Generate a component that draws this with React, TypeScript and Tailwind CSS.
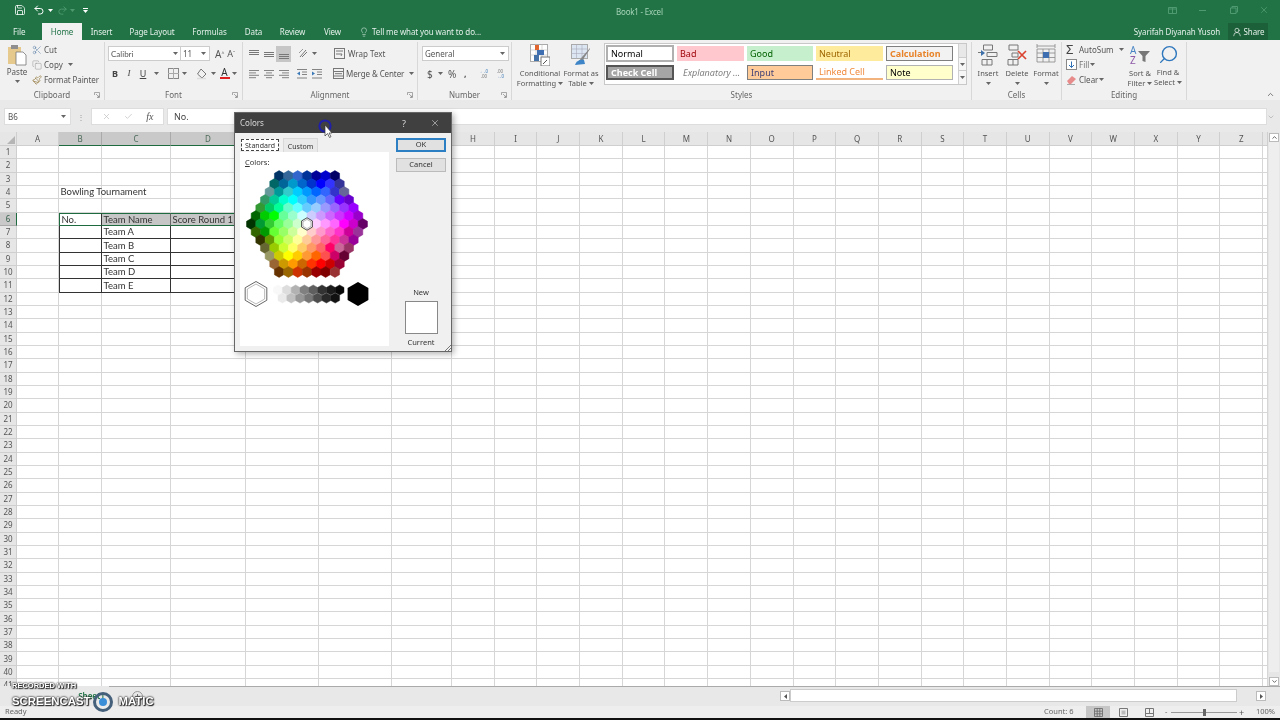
import React from "react";
import { Save, Undo2, Redo2, Lightbulb, Scissors, Copy, Paintbrush, X, Check, ChevronUp, ChevronDown, Search, UserRound } from "lucide-react";

const Caret = ({ c = "#666" }: { c?: string }) => (
  <svg width="5" height="3" viewBox="0 0 5 3" className="shrink-0"><path d="M0 0h5L2.5 3z" fill={c} /></svg>
);

const Launcher = () => (
  <svg width="6" height="6" viewBox="0 0 6 6" className="justify-self-end self-center"><path d="M.5 3V.5H5.5V5.5H3M2 2l3 3M3.5 5H5V3.5" fill="none" stroke="#888" strokeWidth=".7" /></svg>
);

const Group = ({ w, label, launcher, children }: { w: string; label: string; launcher?: boolean; children: React.ReactNode }) => (
  <div className={`${w} shrink-0 flex flex-col h-full border-r border-[#d8d8d8]`}>
    <div className="h-[50px] flex">{children}</div>
    <div className="grid grid-cols-[1fr_auto_1fr] h-[10px] items-center px-[4px] text-[8px] leading-none text-[#666]">
      <span />
      <span>{label}</span>
      {launcher ? <Launcher /> : <span />}
    </div>
  </div>
);

const Lines = ({ kind }: { kind: "l" | "c" | "r" | "t" | "m" | "b" }) => {
  const w = { l: [[1, 11], [1, 8], [1, 11], [1, 8]], c: [[1, 11], [3, 9], [1, 11], [3, 9]], r: [[1, 11], [4, 11], [1, 11], [4, 11]] } as any;
  if (kind === "t" || kind === "m" || kind === "b") {
    const ys = kind === "t" ? [2, 4, 6] : kind === "m" ? [4, 6, 8] : [6, 8, 10];
    return <svg width="12" height="12" viewBox="0 0 12 12">{ys.map((y) => <path key={y} d={`M1 ${y}.5h10`} stroke="#777" strokeWidth="1" />)}</svg>;
  }
  return (
    <svg width="12" height="10" viewBox="0 0 12 10">
      {w[kind].map((p: number[], i: number) => <path key={i} d={`M${p[0]} ${1.5 + i * 2.4}H${p[1]}`} stroke="#777" strokeWidth=".9" />)}
    </svg>
  );
};

const Indent = ({ rev }: { rev?: boolean }) => (
  <svg width="12" height="10" viewBox="0 0 12 10">
    <path d="M1 .5h10M6 3h5M6 5.5h5M1 9h10" stroke="#777" strokeWidth=".9" />
    <path d={rev ? "M1 2.5 4 4.5 1 6.5z" : "M4 2.5 1 4.5 4 6.5z"} fill="#3b79b8" />
  </svg>
);

const BigLabel = ({ a, b, caretB }: { a: string; b?: React.ReactNode; caretB?: boolean }) => (
  <div className="flex flex-col items-center text-[7.5px] leading-[10.5px] text-[#555] whitespace-nowrap mt-[2px]">
    <span>{a}</span>
    <span className="flex items-center gap-[2px] h-[10px]">{b}{caretB && <Caret />}</span>
  </div>
);

const StyleCell = ({ className, children }: { className: string; children: React.ReactNode }) => (
  <div className={`h-[15px] flex items-center pl-[3px] text-[9px] leading-none whitespace-nowrap ${className}`}>{children}</div>
);

function Ribbon() {
  return (
    <div className="h-[60px] bg-[#f1f1f1] flex font-['Noto_Sans',sans-serif] shrink-0 pt-[2px]">
      <Group w="w-[105px]" label="Clipboard" launcher>
        <div className="ml-[6px] w-[22px] flex flex-col items-center">
          <svg width="20" height="22" viewBox="0 0 20 22" className="mt-[2px]">
            <rect x="1" y="3" width="13" height="17" fill="#e6c98c" />
            <rect x="4" y="1" width="7" height="4" fill="#8f8f8f" />
            <path d="M9 8h7l3 3v10H9z" fill="#fff" stroke="#777" strokeWidth=".8" />
          </svg>
          <span className="text-[8px] leading-[10px] text-[#555] mt-[1px]">Paste</span>
          <span className="mt-[3px]"><Caret /></span>
        </div>
        <div className="ml-[4px] flex flex-col text-[8px] text-[#555] leading-none">
          <div className="h-[15px] flex items-center gap-[2px]"><Scissors size={10} color="#5a7ea8" strokeWidth={1.3} />Cut</div>
          <div className="h-[15px] flex items-center gap-[2px]"><Copy size={10} color="#888" strokeWidth={1.1} />Copy<span className="ml-[3px]"><Caret /></span></div>
          <div className="h-[15px] flex items-center gap-[2px] tracking-[-0.1px]"><Paintbrush size={10} color="#8a6d2d" strokeWidth={1.5} />Format Painter</div>
        </div>
      </Group>
      <Group w="w-[138px]" label="Font" launcher>
        <div className="pl-[3px] pt-[4px] flex flex-col gap-[5px] w-full">
          <div className="flex items-center h-[15px]">
            <div className="w-[73px] h-[15px] bg-white border border-[#ccc] flex items-center justify-between pl-[2px] pr-[2px] text-[8px] text-[#555] font-['Lato',sans-serif]">Calibri<Caret /></div>
            <div className="w-[29px] h-[15px] bg-white border border-l-0 border-[#ccc] flex items-center justify-between pl-[2px] pr-[3px] text-[8px] text-[#555]">11<Caret /></div>
            <span className="ml-[5px] text-[10px] leading-none text-[#555]">A<sup className="text-[5px]">^</sup></span>
            <span className="ml-[3px] text-[9px] leading-none text-[#555]">A<sup className="text-[5px]">ˇ</sup></span>
          </div>
          <div className="flex items-center h-[15px] text-[9px] text-[#444] leading-none">
            <span className="w-[8px] ml-[3px] font-bold text-center">B</span>
            <span className="w-[8px] ml-[6px] italic text-center font-['Liberation_Serif',serif]">I</span>
            <span className="w-[8px] ml-[6px] underline text-center">U</span>
            <span className="ml-[7px]"><Caret /></span>
            <svg width="11" height="11" viewBox="0 0 11 11" className="ml-[9px]"><rect x=".5" y=".5" width="10" height="10" fill="none" stroke="#888" /><path d="M5.5 0v11M0 5.5h11" stroke="#aaa" /></svg>
            <span className="ml-[3px]"><Caret /></span>
            <svg width="12" height="12" viewBox="0 0 12 12" className="ml-[9px]"><path d="M5 1 10 6 6 10 1.5 6z" fill="none" stroke="#777" /><path d="M1 10.5h9" stroke="#ddd" strokeWidth="1.5" /></svg>
            <span className="ml-[3px]"><Caret /></span>
            <div className="ml-[4px] w-[9px] flex flex-col items-center text-[#333] text-[10px] leading-[9px]">A<div className="w-[10px] h-[2px] bg-[#e02020]" /></div>
            <span className="ml-[3px]"><Caret /></span>
          </div>
        </div>
      </Group>
      <Group w="w-[175px]" label="Alignment" launcher>
        <div className="pl-[3px] pt-[4px] flex flex-col gap-[5px] w-full">
          <div className="flex items-center h-[15px]">
            <span className="w-[14px] flex justify-center ml-[1px]"><Lines kind="t" /></span>
            <span className="w-[15px] flex justify-center"><Lines kind="m" /></span>
            <span className="w-[15px] h-[16px] bg-[#c6c6c6] flex justify-center items-center"><Lines kind="b" /></span>
            <svg width="12" height="11" viewBox="0 0 12 11" className="ml-[7px]"><path d="M2 9 8 2M4 9l5-5" stroke="#777" /><path d="M1 5 5 1" stroke="#999" /></svg>
            <span className="ml-[2px]"><Caret /></span>
            <svg width="11" height="11" viewBox="0 0 11 11" className="ml-[17px]"><rect x=".5" y=".5" width="10" height="10" fill="none" stroke="#777" /><path d="M2 3h7M2 6h6l-1 2" fill="none" stroke="#777" /></svg>
            <span className="ml-[3px] text-[8px] text-[#555] leading-none">Wrap Text</span>
          </div>
          <div className="flex items-center h-[15px]">
            <span className="w-[14px] flex justify-center ml-[1px]"><Lines kind="l" /></span>
            <span className="w-[15px] flex justify-center"><Lines kind="c" /></span>
            <span className="w-[15px] flex justify-center"><Lines kind="r" /></span>
            <span className="ml-[5px]"><Indent /></span>
            <span className="ml-[3px]"><Indent rev /></span>
            <svg width="11" height="11" viewBox="0 0 11 11" className="ml-[10px]"><rect x=".5" y=".5" width="10" height="10" fill="none" stroke="#777" /><path d="M0 3.5h11M0 8h11M2 5.7h7" stroke="#777" /></svg>
            <span className="ml-[2px] text-[8px] text-[#555] leading-none whitespace-nowrap tracking-[-0.1px]">Merge &amp; Center</span>
            <span className="ml-[5px]"><Caret /></span>
          </div>
        </div>
      </Group>
      <Group w="w-[94px]" label="Number" launcher>
        <div className="pl-[4px] pt-[4px] flex flex-col gap-[5px] w-full">
          <div className="w-[87px] h-[15px] bg-white border border-[#ccc] flex items-center justify-between pl-[2px] pr-[3px] text-[8px] text-[#555]">General<Caret /></div>
          <div className="flex items-center h-[15px] text-[#555] leading-none">
            <span className="ml-[5px] w-[6px] text-[10px]">$</span>
            <span className="ml-[5px]"><Caret /></span>
            <span className="ml-[5px] w-[9px] text-[10px]">%</span>
            <span className="ml-[7px] w-[3px] text-[9px] font-bold">,</span>
            <span className="ml-[13px] w-[8px] flex flex-col items-center gap-[1px] text-[4.5px] leading-[4.5px] text-[#3b79b8] whitespace-nowrap"><span>←.0</span><span className="text-[#777]">.00</span></span>
            <span className="ml-[8px] w-[8px] flex flex-col items-center gap-[1px] text-[4.5px] leading-[4.5px] text-[#777] whitespace-nowrap"><span>.00</span><span className="text-[#3b79b8]">→.0</span></span>
          </div>
        </div>
      </Group>
      <Group w="w-[460px]" label="Styles">
        <div className="w-[54px] ml-[1px] flex flex-col items-center pt-[2px]">
          <svg width="20" height="22" viewBox="0 0 20 22">
            <rect x=".5" y=".5" width="17" height="17" fill="#fff" stroke="#aaa" />
            <path d="M0 6h18M0 11h18M6 0v18M12 0v18" stroke="#bbb" strokeWidth=".6" />
            <rect x="5" y="1" width="4" height="5" fill="#e0652e" /><rect x="7" y="6" width="7" height="5" fill="#3f6fb0" /><rect x="4" y="11" width="5" height="6" fill="#4472a8" />
            <rect x="11" y="13" width="9" height="9" fill="#fff" stroke="#777" /><path d="M13 20l4-4" stroke="#555" />
          </svg>
          <BigLabel a="Conditional" b="Formatting" caretB />
        </div>
        <div className="w-[40px] ml-[-6px] flex flex-col items-center pt-[2px]">
          <svg width="20" height="22" viewBox="0 0 20 22">
            <rect x=".5" y=".5" width="16" height="14" fill="#dce6f3" stroke="#aaa" />
            <path d="M0 5h17M0 9.500h17M5.500 0v15M11 0v15" stroke="#aab" strokeWidth=".6" />
            <path d="M19 4 11 13l-3 4c3 1 5-1 5-3l6-9z" fill="#888" /><path d="M4 21c1-4 5-6 9-5l1 4z" fill="#3d85c6" />
          </svg>
          <BigLabel a="Format as" b="Table" caretB />
        </div>
        <div className="ml-[3px] mt-[1px] w-[363px] h-[42px] bg-white border border-[#c8c8c8] flex">
          <div className="w-[354px] grid grid-cols-[68px_67px_66px_67px_67px] gap-x-[3px] gap-y-[3px] pl-[1px] pt-[2px] content-start">
            <StyleCell className="border-2 border-[#b0b0b0] text-black h-[17px] mt-[-1px]">Normal</StyleCell>
            <StyleCell className="bg-[#ffc7ce] text-[#9c0006]">Bad</StyleCell>
            <StyleCell className="bg-[#c6efce] text-[#006100]">Good</StyleCell>
            <StyleCell className="bg-[#ffeb9c] text-[#9c6500]">Neutral</StyleCell>
            <StyleCell className="bg-[#f2f2f2] border border-[#7f7f7f] text-[#e8832a] font-bold">Calculation</StyleCell>
            <StyleCell className="bg-[#a5a5a5] border-2 border-[#555] text-white font-bold pl-[1px]">Check Cell</StyleCell>
            <StyleCell className="italic text-[#7f7f7f] pl-[6px]">Explanatory ...</StyleCell>
            <StyleCell className="bg-[#ffcc99] border border-[#7f7f7f] text-[#3f3f76]">Input</StyleCell>
            <StyleCell className="border-b-2 border-[#f2b47c] text-[#f08a3c]">Linked Cell</StyleCell>
            <StyleCell className="bg-[#ffffcc] border border-[#b2b2b2] text-black">Note</StyleCell>
          </div>
          <div className="ml-auto w-[8px] flex flex-col border-l border-[#d0d0d0] bg-[#f6f6f6]">
            <div className="h-[14px] border-b border-[#ccc] flex items-center justify-center bg-[#e8e8e8]" />
            <div className="h-[13px] border-b border-[#ccc] flex items-center justify-center"><Caret /></div>
            <div className="h-[13px] flex items-center justify-center"><Caret /></div>
          </div>
        </div>
      </Group>
      <Group w="w-[90px]" label="Cells">
        <div className="w-[28px] ml-[2px] flex flex-col items-center pt-[2px]">
          <svg width="20" height="22" viewBox="0 0 20 22"><path d="M5.500 1h9v5h-9zM0 8.500h4M9 8.500h10v4H9zM4 15.500h10v5.500H4zM9 15v6" fill="none" stroke="#777" /><path d="M3 6 7 9 3 12z" fill="#3d6fa8" /></svg>
          <BigLabel a="Insert" b={<Caret />} />
        </div>
        <div className="w-[28px] ml-[1px] flex flex-col items-center pt-[2px]">
          <svg width="20" height="22" viewBox="0 0 20 22"><path d="M2 1h9v5H2zM5 9h6v4H5zM1 15.500h10v5.500H1zM6 15v6" fill="none" stroke="#777" /><path d="M11 7 19 15M19 7l-8 8" stroke="#d9432f" strokeWidth="1.700" /></svg>
          <BigLabel a="Delete" b={<Caret />} />
        </div>
        <div className="w-[28px] ml-[1px] flex flex-col items-center pt-[2px]">
          <svg width="20" height="22" viewBox="0 0 20 22"><path d="M1 5h18v13H1zM7 5v13M13 5v13M1 9h18M1 13.500h18M1 2h18M1 0v4M19 0v4" fill="none" stroke="#888" strokeWidth=".8" /><rect x="7" y="8" width="6" height="6" fill="#3f6fb0" /></svg>
          <BigLabel a="Format" b={<Caret />} />
        </div>
      </Group>
      <Group w="w-[125px]" label="Editing">
        <div className="ml-[4px] flex flex-col text-[8px] text-[#555] leading-none w-[60px]">
          <div className="h-[15px] flex items-center gap-[2px] whitespace-nowrap"><span className="text-[13px] w-[11px] text-[#444] leading-none">Σ</span>AutoSum<span className="ml-[3px]"><Caret /></span></div>
          <div className="h-[15px] flex items-center gap-[2px]"><svg width="11" height="11" viewBox="0 0 11 11"><rect x=".5" y=".5" width="10" height="10" fill="#fff" stroke="#888" /><path d="M5.500 2.500v6M3 6l2.500 2.500L8 6" fill="none" stroke="#2f6fb5" /></svg><span className="text-[#777] flex items-center gap-[1px]">Fill<Caret /></span></div>
          <div className="h-[15px] flex items-center gap-[2px]"><svg width="11" height="11" viewBox="0 0 11 11"><path d="M1 7 6 2l4 3-5 5H3z" fill="#e88b8b" /><path d="M1 10.500h8" stroke="#aaa" /></svg><span className="flex items-center gap-[1px]">Clear<Caret /></span></div>
        </div>
        <div className="w-[28px] flex flex-col items-center pt-[2px]">
          <svg width="22" height="22" viewBox="0 0 22 22"><text x="1" y="10" fontSize="10" fontFamily="Noto Sans" fill="#4a86c5">A</text><text x="1" y="20" fontSize="10" fontFamily="Noto Sans" fill="#8e5aa8">Z</text><path d="M9 7h12l-4.500 5v6l-3-1v-5z" fill="#777" /></svg>
          <BigLabel a="Sort &" b="Filter" caretB />
        </div>
        <div className="w-[28px] flex flex-col items-center pt-[2px]">
          <Search size={21} color="#2f77bd" strokeWidth={1.6} className="scale-x-[-1]" />
          <BigLabel a="Find &" b="Select" caretB />
        </div>
      </Group>
      <div className="flex-1 flex items-end justify-end pr-[5px] pb-[1px]"><ChevronUp size={9} color="#555" strokeWidth={2} /></div>
    </div>
  );
}

function FormulaBar() {
  return (
    <div className="h-[32px] shrink-0 bg-[#e9e9e9] flex items-start pt-[8px] pl-[4px] font-['Noto_Sans',sans-serif] text-[8px] text-[#555]">
      <div className="w-[67px] h-[17px] bg-white border border-[#ddd] flex items-center justify-between pl-[3px] pr-[4px]">B6<Caret /></div>
      <span className="w-[20px] text-center text-[#999] leading-[17px]">⋮</span>
      <div className="w-[73px] h-[17px] bg-white border border-[#ddd] flex items-center justify-around px-[3px]">
        <X size={9} color="#c4c4c4" /><Check size={9} color="#c4c4c4" /><span className="italic font-['Liberation_Serif',serif] text-[10px] leading-none text-[#555]">fx</span>
      </div>
      <div className="w-[1100px] h-[17px] ml-[3px] bg-white border border-[#ddd] flex items-center pl-[6px] text-[9px] text-[#444]">No.</div>
      <ChevronDown size={8} color="#aaa" className="mt-[5px]" />
    </div>
  );
}

const cols = ["A", "B", "C", "D", "E", "F", "G", "H", "I", "J", "K", "L", "M", "N", "O", "P", "Q", "R", "S", "T", "U", "V", "W", "X", "Y", "Z", ""];

function cellClass(r: number, c: number) {
  const inTable = r >= 7 && r <= 11 && c >= 1 && c <= 3;
  if (r === 6 && c === 1) return "bg-white border-y border-l border-r border-[#1d6b3e] border-r-[#333]";
  if (r === 6 && c >= 2 && c <= 6) return "bg-[#c6c6c6] border-y border-[#1d6b3e] border-r border-r-[#666]";
  if (inTable && c === 1) return "border-l border-r border-b border-[#333]";
  if (inTable) return "border-r border-b border-[#333]";
  return "border-r border-b border-[#d6d6d6]";
}

const data: Record<string, string> = {
  "4,1": "Bowling Tournament", "6,1": "No.", "6,2": "Team Name", "6,3": "Score Round 1",
  "7,2": "Team A", "8,2": "Team B", "9,2": "Team C", "10,2": "Team D", "11,2": "Team E",
};

function Sheet() {
  const rows = Array.from({ length: 41 }, (_, i) => i + 1);
  return (
    <div className="flex-1 flex bg-white min-h-0 overflow-hidden">
      <div className="w-[1268px] shrink-0 grid grid-cols-[17px_42px_43px_69px_75px_73px_73px_60px_repeat(19,42.7px)_1fr] grid-rows-[14px_repeat(41,13.33px)] font-['Lato',sans-serif] text-[9.5px] text-[#333] leading-none">
        <div className="bg-[#e6e6e6] border-r border-b border-[#cfcfcf] flex items-end justify-end p-[1px]">
          <svg width="8" height="8" viewBox="0 0 8 8"><path d="M8 0v8H0z" fill="#b5b5b5" /></svg>
        </div>
        {cols.map((c, i) => (
          <div key={i} className={i >= 1 && i <= 6
            ? "bg-[#c9c9c9] border-r border-[#aaa] border-b border-b-[#1d6b3e] flex items-center justify-center text-[8px] text-[#4d6b5a] font-['Noto_Sans',sans-serif]"
            : "bg-[#e6e6e6] border-r border-b border-[#cfcfcf] flex items-center justify-center text-[8px] text-[#555] font-['Noto_Sans',sans-serif]"}>{c}</div>
        ))}
        {rows.map((r) => (
          <React.Fragment key={r}>
            <div className={r === 6
              ? "bg-[#c9c9c9] border-r border-r-[#1d6b3e] border-b border-[#aaa] flex items-center justify-center text-[8px] text-[#35604a] font-['Noto_Sans',sans-serif]"
              : "bg-[#e6e6e6] border-r border-b border-[#cfcfcf] flex items-center justify-center text-[8px] text-[#555] font-['Noto_Sans',sans-serif]"}>{r}</div>
            {cols.map((_, c) => (
              <div key={c} className={`${cellClass(r, c)} flex items-center pl-[1.500px] whitespace-nowrap`}>{data[`${r},${c}`]}</div>
            ))}
          </React.Fragment>
        ))}
      </div>
      <div className="flex-1 bg-[#e6e6e6] flex flex-col items-center pt-[1px]">
        <div className="w-[10px] h-[9px] bg-white border border-[#bbb] flex items-center justify-center"><ChevronUp size={7} color="#555" strokeWidth={3} /></div>
        <div className="w-[10px] h-[530px] bg-[#eeeeee]" />
        <div className="w-[10px] h-[9px] bg-white border border-[#bbb] flex items-center justify-center mt-auto"><ChevronDown size={7} color="#555" strokeWidth={3} /></div>
      </div>
    </div>
  );
}

function SheetTabs() {
  return (
    <div className="h-[20px] shrink-0 bg-[#e8e8e8] flex font-['Noto_Sans',sans-serif] text-[8px]">
      <div className="w-[74px]" />
      <div className="w-[35px] flex items-center justify-center text-[#217346] font-semibold">Sheet1</div>
      <div className="flex-1 border-t border-[#aaa] flex items-start pt-[4px]">
        <svg width="11" height="11" viewBox="0 0 11 11" className="ml-[23px]"><circle cx="5.500" cy="5.500" r="5" fill="none" stroke="#999" /><path d="M5.500 3v5M3 5.500h5" stroke="#777" /></svg>
        <div className="ml-[637px] w-[10px] h-[10px] bg-white border border-[#bbb] flex items-center justify-center"><svg width="3" height="5" viewBox="0 0 3 5"><path d="M3 0v5L0 2.500z" fill="#555" /></svg></div>
        <div className="w-[447px] h-[13px] mt-[-2px] bg-white border border-[#ccc]" />
        <div className="ml-[19px] w-[10px] h-[10px] bg-white border border-[#bbb] flex items-center justify-center"><svg width="3" height="5" viewBox="0 0 3 5"><path d="M0 0v5l3-2.500z" fill="#555" /></svg></div>
      </div>
    </div>
  );
}

function StatusBar() {
  return (
    <div className="h-[12px] shrink-0 bg-[#eeeeee] flex items-center pl-[5px] text-[7.5px] text-[#666] font-['Noto_Sans',sans-serif] leading-none">
      <span className="w-[1039px] -mt-[1px]">Ready</span>
      <span className="w-[42px]">Count: 6</span>
      <div className="w-[24px] h-full bg-[#c6c6c6] flex items-center justify-center"><svg width="9" height="9" viewBox="0 0 9 9"><path d="M.5.500h8v8h-8zM3.200.500v8M5.800.500v8M.5 3.200h8M.5 5.800h8" fill="none" stroke="#666" strokeWidth=".8" /></svg></div>
      <svg width="9" height="9" viewBox="0 0 9 9" className="ml-[9px]"><path d="M.5.500h8v8h-8z" fill="none" stroke="#777" /><rect x="2.500" y="2.500" width="4" height="4" fill="#bbb" /></svg>
      <svg width="9" height="9" viewBox="0 0 9 9" className="ml-[17px]"><path d="M.5.500h8v8h-8zM4.500.500v5M.5 5.500h8" fill="none" stroke="#777" /></svg>
      <span className="ml-[11px] w-[3px] text-[#666]">-</span>
      <div className="ml-[3px] w-[66px] h-[1px] bg-[#999] flex justify-center items-center"><div className="w-[3px] h-[7px] bg-[#666]" /></div>
      <span className="ml-[2px] w-[6px] text-[9px] text-[#555]">+</span>
      <span className="ml-[11px]">100%</span>
    </div>
  );
}

const palette = [
  "003366 336699 3366CC 003399 000099 0000CC 000066",
  "006666 006699 0099CC 0066CC 0033CC 0000FF 3333FF 333399",
  "669999 009999 33CCCC 00CCFF 0099FF 0066FF 3366FF 3333CC 666699",
  "339966 00CC99 00FFCC 00FFFF 33CCFF 3399FF 6699FF 6666FF 6600FF 6600CC",
  "339933 00CC66 00FF99 66FFCC 66FFFF 66CCFF 99CCFF 9999FF 9966FF 9933FF 9900FF",
  "006600 00CC00 00FF00 66FF99 99FFCC CCFFFF CCCCFF CC99FF CC66FF CC33FF CC00FF 9900CC",
  "003300 009933 33CC33 66FF66 99FF99 CCFFCC FFFFFF FFCCFF FF99FF FF66FF FF00FF CC00CC 660066",
  "336600 009900 66FF33 99FF66 CCFF99 FFFFCC FFCCCC FF99CC FF66CC FF33CC CC0099 993399",
  "333300 669900 99FF33 CCFF66 FFFF99 FFCC99 FF9999 FF6699 FF3399 CC3399 990099",
  "666633 99CC00 CCFF33 FFFF66 FFCC66 FF9966 FF6666 FF0066 CC6699 993366",
  "999966 CCCC00 FFFF00 FFCC00 FF9933 FF6600 FF5050 CC0066 660033",
  "996633 CC9900 FF9900 CC6600 FF3300 FF0000 CC0000 990033",
  "663300 996600 CC3300 993300 990000 800000 993333",
].map((s) => s.split(" "));

const greys = [
  "F8F8F8 DDDDDD B2B2B2 808080 5F5F5F 333333 1C1C1C 080808".split(" "),
  "EAEAEA C0C0C0 969696 777777 4D4D4D 292929 111111".split(" "),
];

const hex = (cx: number, cy: number, r: number) => {
  const w = r * 0.866;
  return `${cx},${cy - r} ${cx + w},${cy - r / 2} ${cx + w},${cy + r / 2} ${cx},${cy + r} ${cx - w},${cy + r / 2} ${cx - w},${cy - r / 2}`;
};

function ColorHoneycomb() {
  const cx = 67;
  const cy = 56;
  const px = 9.3;
  return (
    <svg width="148" height="142" viewBox="0 0 148 142" className="block">
      {palette.map((row, ri) =>
        row.map((c, i) => (
          <polygon key={`${ri}-${i}`} points={hex(cx + (i - (row.length - 1) / 2) * px, cy + (ri - 6) * 8, 5.4)} fill={`#${c}`} stroke={`#${c}`} strokeWidth=".5" />
        ))
      )}
      <polygon points={hex(cx, cy, 6.2)} fill="#fff" stroke="#222" strokeWidth=".8" />
      <polygon points={hex(cx, cy, 4.6)} fill="#fff" stroke="#888" strokeWidth=".6" />
      {greys.map((row, ri) =>
        row.map((c, i) => (
          <polygon key={`g${ri}-${i}`} points={hex(38 + ri * 4.4 + i * 8.8, 122 + ri * 8, 5.1)} fill={`#${c}`} stroke={`#${c}`} strokeWidth=".4" />
        ))
      )}
      <polygon points={hex(16, 126, 12.5)} fill="#fff" stroke="#555" strokeWidth=".9" />
      <polygon points={hex(16, 126, 10)} fill="#fff" stroke="#999" strokeWidth=".7" />
      <polygon points={hex(118, 126, 12)} fill="#000" />
    </svg>
  );
}

function ColorsDialog() {
  return (
    <div className="absolute left-[234px] top-[112px] w-[218px] h-[240px] bg-[#f0f0f0] border border-[#666] shadow-[2px_2px_6px_rgba(0,0,0,0.3)] flex flex-col font-['Noto_Sans',sans-serif] text-[7.5px] text-[#333] leading-none">
      <div className="h-[20px] bg-[#404040] flex items-center pl-[5px] text-[8px] text-[#d8d8d8] shrink-0">
        <span>Colors</span>
        <span className="ml-auto mr-[24px] text-[9px]">?</span>
        <X size={10} color="#ddd" className="mr-[11px]" strokeWidth={1.4} />
      </div>
      <div className="flex-1 flex pl-[5px] min-h-0">
        <div className="w-[149px] flex flex-col shrink-0">
          <div className="flex h-[19px] items-end pl-[1px] text-[7px]">
            <div className="h-[12px] w-[38px] flex items-center justify-center border border-dashed border-[#444] bg-white mb-[1px]">Standard</div>
            <div className="h-[14px] w-[35px] ml-[4px] flex items-center justify-center bg-[#e9e9e9] border border-b-0 border-[#d9d9d9] pt-[1px]">Custom</div>
          </div>
          <div className="flex-1 bg-white mb-[5px]">
            <div className="h-[16px] pl-[5px] pt-[7px]"><span className="underline">C</span>olors:</div>
            <ColorHoneycomb />
          </div>
        </div>
        <div className="flex-1 flex flex-col items-center pt-[5px] pl-[7px] pr-[5px]">
          <div className="w-[50px] h-[14px] bg-[#e1e1e1] border-2 border-[#2d7fc4] flex items-center justify-center">OK</div>
          <div className="w-[50px] h-[14px] mt-[6px] bg-[#e1e1e1] border border-[#bbb] flex items-center justify-center">Cancel</div>
          <span className="mt-[117px]">New</span>
          <div className="w-[33px] h-[33px] mt-[4px] bg-white border border-[#888]" />
          <span className="mt-[5px]">Current</span>
        </div>
      </div>
      <svg width="7" height="7" viewBox="0 0 7 7" className="absolute right-0 bottom-0"><path d="M7 1 1 7M7 4 4 7" stroke="#777" /></svg>
    </div>
  );
}

export default function App() {
  return (
    <div className="relative w-[1280px] h-[720px] overflow-hidden flex flex-col bg-white blur-[0.35px]">
      <div className="h-[23px] shrink-0 bg-[#217346] flex items-center font-['Noto_Sans',sans-serif] text-[8px] text-[#a6d3b7] whitespace-nowrap">
        <Save size={12} color="#fff" strokeWidth={1.6} className="ml-[14px] -mt-[3px]" />
        <Undo2 size={12} color="#fff" strokeWidth={2} className="ml-[7px] -mt-[3px]" />
        <span className="ml-[3px] -mt-[3px]"><Caret c="#fff" /></span>
        <Redo2 size={11} color="#4f9a70" strokeWidth={2} className="ml-[4px] -mt-[3px]" />
        <span className="ml-[2px] -mt-[3px]"><Caret c="#4f9a70" /></span>
        <span className="ml-[8px] -mt-[3px] flex flex-col items-center gap-[1px]"><span className="w-[5px] h-[1px] bg-white" /><Caret c="#fff" /></span>
        <span className="w-[46px] ml-[528px] tracking-[-0.2px]">Book1 - Excel</span>
        <svg width="9" height="7" viewBox="0 0 9 7" className="ml-[506px] -mt-[3px]"><path d="M.5.500h8v6h-8zM4.500.500v6M.5 2h8" fill="none" stroke="#4f9a70" /></svg>
        <span className="ml-[22px] w-[7px] h-[1px] bg-[#4f9a70] -mt-[3px]" />
        <svg width="8" height="8" viewBox="0 0 8 8" className="ml-[24px] -mt-[3px]"><path d="M.5 2h5.500v5.500H.5zM2 2V.5h5.500V6H6" fill="none" stroke="#4f9a70" /></svg>
        <X size={10} color="#4f9a70" className="ml-[21px] -mt-[3px]" />
      </div>
      <div className="h-[17px] shrink-0 bg-[#217346] flex items-stretch font-['Noto_Sans',sans-serif] text-[8px] text-[#e4f0e9] leading-none tracking-[-0.1px] whitespace-nowrap">
        <span className="ml-[13px] w-[29px] flex items-center">File</span>
        <span className="w-[40px] bg-[#f1f1f1] text-[#217346] flex items-center justify-center">Home</span>
        <span className="w-[39px] flex items-center justify-center">Insert</span>
        <span className="w-[62px] flex items-center justify-center">Page Layout</span>
        <span className="w-[53px] flex items-center justify-center">Formulas</span>
        <span className="w-[35px] flex items-center justify-center">Data</span>
        <span className="w-[43px] flex items-center justify-center">Review</span>
        <span className="w-[37px] flex items-center justify-center">View</span>
        <span className="ml-[8px] flex items-center gap-[3px]"><Lightbulb size={10} color="#e4f0e9" strokeWidth={1.3} />Tell me what you want to do...</span>
        <span className="ml-auto flex items-center pr-[8px] text-[8px]">Syarifah Diyanah Yusoh</span>
        <span className="w-[40px] mr-[12px] bg-[#1b6038] flex items-center justify-center gap-[2px]"><UserRound size={10} color="#fff" strokeWidth={1.5} />Share</span>
      </div>
      <Ribbon />
      <FormulaBar />
      <Sheet />
      <SheetTabs />
      <StatusBar />
      <div className="h-[2px] shrink-0 bg-[#111]" />
      <ColorsDialog />

      <svg width="16" height="22" viewBox="0 0 16 22" className="absolute left-[318px] top-[118px]">
        <circle cx="7" cy="8" r="5.600" fill="none" stroke="#1f1fa8" strokeWidth="2" />
        <path d="M7 7v11l2.500-2.500 2 4 1.500-.8-2-3.700H14z" fill="#fff" stroke="#333" strokeWidth=".7" />
      </svg>

      <div className="absolute left-[12px] top-[682px] font-['Liberation_Sans',sans-serif] font-bold text-white leading-none [text-shadow:0_0_2px_#222,0_0_2px_#222,1px_1px_1px_#222]">
        <div className="text-[7.5px]">RECORDED WITH</div>
        <div className="flex items-center text-[11.4px] mt-[2px]">
          <span>SCREENCAST</span>
          <span className="w-[20px] h-[20px] ml-[3px] mr-[5px] rounded-full border-[3px] border-[#44607a] flex items-center justify-center">
            <span className="w-[8px] h-[8px] rounded-full bg-[#3b8fd9]" />
          </span>
          <span>MATIC</span>
        </div>
      </div>
    </div>
  );
}
